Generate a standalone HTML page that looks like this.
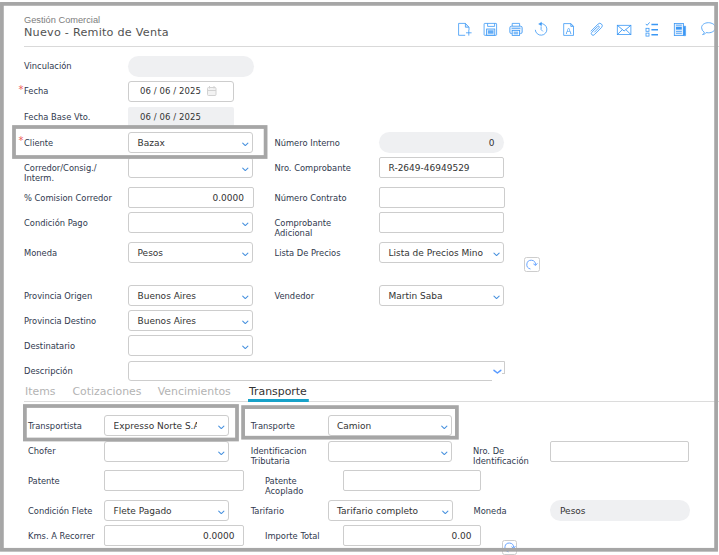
<!DOCTYPE html>
<html lang="es"><head><meta charset="utf-8"><title>Nuevo - Remito de Venta</title>
<style>
*{box-sizing:border-box;margin:0;padding:0}
html,body{width:719px;height:555px;background:#fff;overflow:hidden}
body{position:relative;font-family:"DejaVu Sans","Liberation Sans",sans-serif;color:#333a47}
.l{position:absolute;font-family:"DejaVu Sans Condensed","Liberation Sans",sans-serif;font-size:9.25px;line-height:10px;color:#30394e;white-space:nowrap}
.f{position:absolute;height:21px;border:1px solid #cdcdcd;border-radius:3px;background:#fff;font-family:"DejaVu Sans","Liberation Sans",sans-serif;font-size:9px;line-height:19px;color:#333;padding:1px 0 0 8.5px;white-space:nowrap;overflow:hidden}
.f.i{border-radius:2px}
.f.r{text-align:right;padding:1px 8.5px 0 0}
.p{position:absolute;height:21px;border-radius:10.5px;background:#eff0f2;font-family:"DejaVu Sans","Liberation Sans",sans-serif;font-size:9px;line-height:19px;color:#333;padding:2px 0 0 10px;white-space:nowrap;overflow:hidden}
.p.r{text-align:right;padding:2px 9.5px 0 0}
.f.d{font-family:"DejaVu Sans Condensed","Liberation Sans",sans-serif;font-size:9.45px;letter-spacing:.1px;padding-top:0;line-height:18px}
.ast{position:absolute;color:#ee5b5b;font-family:"DejaVu Sans","Liberation Sans",sans-serif;font-size:10px;line-height:10px}
.t{position:absolute;top:385px;font-family:"DejaVu Sans","Liberation Sans",sans-serif;font-size:10.9px;line-height:14px;color:#b3b3b3;white-space:nowrap}
.t.a{color:#333}
svg{position:absolute;left:0;top:0}
</style></head>
<body>
<div style="position:absolute;left:24px;top:14px;font-family:'Liberation Sans',sans-serif;font-size:9.25px;line-height:12px;color:#7d7d7d;white-space:nowrap">Gestión Comercial</div>
<div style="position:absolute;left:24px;top:25px;font-family:'DejaVu Sans','Liberation Sans',sans-serif;font-size:11.2px;letter-spacing:.24px;line-height:16px;color:#525252;white-space:nowrap">Nuevo - Remito de Venta</div>
<div style="position:absolute;left:24px;top:46px;width:695px;height:1px;background:#d9d9d9"></div>
<div class="l" style="left:24px;top:61.2px">Vinculación</div>
<div class="p" style="left:128px;top:56px;width:126px"></div>
<div class="ast" style="left:18.5px;top:85px">*</div>
<div class="l" style="left:24px;top:86.2px">Fecha</div>
<div class="f d" style="left:128px;top:81px;width:106px;padding-left:11px">06 / 06 / 2025</div>
<div class="l" style="left:24px;top:111.7px">Fecha Base Vto.</div>
<div class="f d" style="left:128px;top:107px;width:106px;padding-left:12px;border:0;background:#eff0f2;border-radius:2px;line-height:19px">06 / 06 / 2025</div>
<div class="ast" style="left:18.5px;top:136px">*</div>
<div class="l" style="left:24px;top:137.7px">Cliente</div>
<div class="f" style="left:128px;top:132px;width:125px;padding-right:22px">Bazax</div>
<div class="l" style="left:24px;top:162.7px">Corredor/Consig./<br>Interm.</div>
<div class="f" style="left:128px;top:157px;width:125px;padding-right:22px"></div>
<div class="l" style="left:24px;top:192.7px">% Comision Corredor</div>
<div class="f i r" style="left:128px;top:187px;width:125.5px">0.0000</div>
<div class="l" style="left:24px;top:217.7px">Condición Pago</div>
<div class="f" style="left:128px;top:212px;width:125px;padding-right:22px"></div>
<div class="l" style="left:24px;top:247.7px">Moneda</div>
<div class="f" style="left:128px;top:242px;width:125px;padding-right:22px">Pesos</div>
<div class="l" style="left:24px;top:290.7px">Provincia Origen</div>
<div class="f" style="left:128px;top:285px;width:125px;padding-right:22px">Buenos Aires</div>
<div class="l" style="left:24px;top:315.7px">Provincia Destino</div>
<div class="f" style="left:128px;top:310px;width:125px;padding-right:22px">Buenos Aires</div>
<div class="l" style="left:24px;top:340.7px">Destinatario</div>
<div class="f" style="left:128px;top:335px;width:125px;padding-right:22px"></div>
<div class="l" style="left:24px;top:365.7px">Descripción</div>
<div class="f i" style="left:128px;top:361px;width:377px;height:20px;border-radius:3px 0 0 3px"></div>
<div style="position:absolute;left:492.3px;top:374px;width:14px;height:8px;background:#fff"></div>
<div style="position:absolute;left:502px;top:373px;width:3px;height:1px;background:#cdcdcd"></div>
<div class="l" style="left:274.5px;top:137.7px">Número Interno</div>
<div class="p r" style="left:379px;top:132px;width:125px">0</div>
<div class="l" style="left:274.5px;top:162.7px">Nro. Comprobante</div>
<div class="f i" style="left:379px;top:157px;width:125px">R-2649-46949529</div>
<div class="l" style="left:274.5px;top:192.7px">Número Contrato</div>
<div class="f i" style="left:379px;top:187px;width:126px"></div>
<div class="l" style="left:274.5px;top:217.7px">Comprobante<br>Adicional</div>
<div class="f i" style="left:379px;top:212px;width:125px"></div>
<div class="l" style="left:274.5px;top:247.7px">Lista De Precios</div>
<div class="f" style="left:379px;top:242px;width:125px;padding-right:22px">Lista de Precios Mino</div>
<div class="l" style="left:274.5px;top:290.7px">Vendedor</div>
<div class="f" style="left:379px;top:285px;width:125px;padding-right:22px">Martin Saba</div>
<div style="position:absolute;left:524px;top:257px;width:16px;height:15px;border:1px solid #cdcdcd;border-radius:2.5px;background:#fff"></div>
<div style="position:absolute;left:502px;top:540px;width:15px;height:15px;border:1px solid #cdcdcd;border-radius:2.5px;background:#fff"></div>
<div class="t" style="left:25px">Items</div>
<div class="t" style="left:72.5px">Cotizaciones</div>
<div class="t" style="left:157.7px">Vencimientos</div>
<div class="t a" style="left:249px">Transporte</div>
<div style="position:absolute;left:24px;top:401px;width:695px;height:1px;background:#dcdcdc"></div>
<div class="l" style="left:28px;top:420.5px">Transportista</div>
<div class="f" style="left:104px;top:415px;width:125px;padding-right:22px"><span style="display:block;width:83.6px;overflow:hidden">Expresso Norte S.A</span></div>
<div class="l" style="left:250.75px;top:420.5px">Transporte</div>
<div class="f" style="left:327.5px;top:415px;width:124.5px;padding-right:22px">Camion</div>
<div class="l" style="left:28px;top:446.2px">Chofer</div>
<div class="f" style="left:104px;top:441px;width:125px;padding-right:22px"></div>
<div class="l" style="left:250.75px;top:446.2px">Identificacion<br>Tributaria</div>
<div class="f" style="left:327.5px;top:441px;width:124.5px;padding-right:22px"></div>
<div class="l" style="left:473px;top:446.2px">Nro. De<br>Identificación</div>
<div class="f i" style="left:550px;top:441px;width:139px"></div>
<div class="l" style="left:28px;top:475.7px">Patente</div>
<div class="f i" style="left:104px;top:470px;width:140px"></div>
<div class="l" style="left:265px;top:475.7px">Patente<br>Acoplado</div>
<div class="f i" style="left:342.5px;top:470px;width:138.5px"></div>
<div class="l" style="left:28px;top:505.7px">Condición Flete</div>
<div class="f" style="left:104px;top:500px;width:125px;padding-right:22px">Flete Pagado</div>
<div class="l" style="left:250.75px;top:505.7px">Tarifario</div>
<div class="f" style="left:327.5px;top:500px;width:125.5px;padding-right:22px">Tarifario completo</div>
<div class="l" style="left:473.5px;top:505.7px">Moneda</div>
<div class="p" style="left:550px;top:500px;width:140px">Pesos</div>
<div class="l" style="left:28px;top:530.7px">Kms. A Recorrer</div>
<div class="f i r" style="left:104px;top:525px;width:140px">0.0000</div>
<div class="l" style="left:265px;top:530.7px">Importe Total</div>
<div class="f i r" style="left:342.5px;top:525px;width:138.5px">0.00</div>
<svg width="719" height="555" viewBox="0 0 719 555">
<g fill="none" stroke="#4690de" stroke-width="1.05" stroke-linecap="round" stroke-linejoin="round">
<path d="M242.70 143.05l2.6 2.5 2.6-2.5"/>
<path d="M242.70 168.05l2.6 2.5 2.6-2.5"/>
<path d="M242.70 223.05l2.6 2.5 2.6-2.5"/>
<path d="M242.70 253.05l2.6 2.5 2.6-2.5"/>
<path d="M242.70 296.05l2.6 2.5 2.6-2.5"/>
<path d="M242.70 321.05l2.6 2.5 2.6-2.5"/>
<path d="M242.70 346.05l2.6 2.5 2.6-2.5"/>
<path d="M493.95 253.05l2.6 2.5 2.6-2.5"/>
<path d="M493.95 296.05l2.6 2.5 2.6-2.5"/>
<path d="M218.70 426.05l2.6 2.5 2.6-2.5"/>
<path d="M441.70 426.05l2.6 2.5 2.6-2.5"/>
<path d="M218.70 452.05l2.6 2.5 2.6-2.5"/>
<path d="M441.70 452.05l2.6 2.5 2.6-2.5"/>
<path d="M218.70 511.05l2.6 2.5 2.6-2.5"/>
<path d="M442.70 511.05l2.6 2.5 2.6-2.5"/>
</g>
<path d="M494 370.3l3.4 2.7 3.4-2.7" fill="none" stroke="#5a9bff" stroke-width="1.5" stroke-linecap="round" stroke-linejoin="round"/>
<rect x="248" y="399" width="60.8" height="3" fill="#17a2c9"/>
<g fill="none" stroke="#d2d2d2" stroke-width="1"><rect x="207.5" y="87.5" width="8.5" height="8" rx="1" fill="#f3f3f3"/><path d="M209.5 86v2.5M214 86v2.5M207.5 90.5h8.5"/></g>
<g fill="none" stroke="#6aa6ff" stroke-width="1" stroke-linecap="round" stroke-linejoin="round"><path d="M530.10 268.90A4.4 4.4 0 1 1 535.60 264.50"/><path d="M533.70 264.10l1.9 1.4 1.5-1.9"/></g>
<g fill="none" stroke="#6aa6ff" stroke-width="1" stroke-linecap="round" stroke-linejoin="round"><path d="M508.20 551.70A4.4 4.4 0 1 1 513.70 547.30"/><path d="M511.80 546.90l1.9 1.4 1.5-1.9"/></g>
<defs><filter id="nf" x="-20%" y="-20%" width="140%" height="140%"><feOffset dx="0" dy="0"/></filter></defs>
<g fill="none" stroke="#3b98f5" stroke-width="0.8" stroke-linejoin="miter" stroke-linecap="butt">
<!-- new document -->
<path d="M465.4 23.4H458.6V35.3H465.2M469 27.2V30"/>
<path d="M465.4 23.4L469 27.2H465.4Z" fill="#d9eafc"/>
<path d="M466 32.8H471.6M468.8 30V35.6"/>
<!-- save -->
<rect x="484.1" y="23.4" width="12.5" height="11.9" rx="0.6"/>
<path d="M487.6 23.4V26.4H494.6V23.4"/>
<rect x="486.6" y="29" width="8.2" height="6.3" fill="#d9eafc"/>
<path d="M488 31.2H493.4M488 32.9H493.4" stroke-width="1.3"/>
<!-- printer -->
<path d="M512.2 26.2V23.4H519.6V26.2"/>
<rect x="509.8" y="26.2" width="12.4" height="7.4" rx="1.6" fill="#e3effd"/>
<rect x="512.2" y="30.4" width="7.4" height="5" fill="#fff"/>
<path d="M513.6 32.2H518.2M513.6 33.8H518.2" stroke-width="0.9"/>
<path d="M511.6 28.3H520.4" stroke-width="0.8"/>
<!-- history -->
<path d="M540.6 23.6A5.8 5.8 0 1 1 535.3 29.8"/>
<path d="M541.5 22.2L538.6 24L541.5 25.8Z" fill="#3b98f5" stroke-width="0.4"/>
<path d="M541.1 26.4V29.6L542.9 31.4"/>
<!-- document A -->
<path d="M570.8 23.6H563.7V35.4H573.5V26.4Z"/>
<path d="M570.8 23.6V26.4H573.5Z" fill="#d9eafc"/>
<!-- paperclip -->
<g transform="translate(596.4 29.2) rotate(-45)"><path d="M-5.4 -2.45H4.8A2.45 2.45 0 0 1 4.8 2.45H-5.4A1.75 1.75 0 0 1 -5.4 -1.05H3A0.9 0.9 0 0 1 3 0.75H-3.8" stroke-width="0.8"/></g>
<!-- mail -->
<rect x="617.3" y="25.3" width="13.6" height="9.3"/>
<path d="M617.3 25.3L624.1 31L630.9 25.3M617.3 34.6L622.4 29.6M630.9 34.6L625.8 29.6" stroke-width="0.9"/>
<!-- checklist -->
<path d="M645.8 23.9L647.1 25.3L649.6 22.4" stroke-width="0.9"/>
<rect x="646" y="28.3" width="3" height="3" stroke-width="0.8"/>
<rect x="646" y="33.1" width="3" height="3" stroke-width="0.8"/>
<path d="M651.4 24.6H658M651.4 29.8H658M651.4 34.7H658" stroke-width="1.5" stroke-linecap="butt"/>
<!-- news -->
<rect x="674.3" y="23.4" width="9.2" height="12.2" fill="#e3effd"/>
<path d="M683.6 26.2H685.6V35.7H683.6Z" fill="#3b98f5" stroke-width="0.5"/>
<rect x="676" y="26.8" width="5.8" height="2.8" fill="#3b98f5" stroke="none"/>
<path d="M676 25.2H681.8M676 31.4H681.8M676 33.3H681.8" stroke-width="0.8"/>
<!-- chat -->
<path d="M704.3 32.2A5.4 5.4 0 0 1 701.6 27.7C701.6 24.7 704.7 22.7 708.4 22.7S715.4 24.8 715.4 27.7S712.2 32.8 708.4 32.8C707.6 32.8 706.9 32.7 706.2 32.6C705.4 33.6 704 34.5 702.6 34.6C703.6 33.8 704.2 33 704.3 32.2Z"/>
</g>
<text x="568.6" y="33.9" text-anchor="middle" font-family="'Liberation Sans',sans-serif" font-size="8.5" fill="#3b98f5" filter="url(#nf)">A</text>
<g fill="none" stroke="#a6a6a6" stroke-width="3.75">
<rect x="1.9" y="3.9" width="714.2" height="545.9"/>
<rect x="14" y="127" width="251.6" height="30"/>
<rect x="24.9" y="406" width="212.1" height="33.5"/>
<rect x="243.1" y="407.1" width="213.8" height="30.6"/>
</g>
</svg>
</body></html>
